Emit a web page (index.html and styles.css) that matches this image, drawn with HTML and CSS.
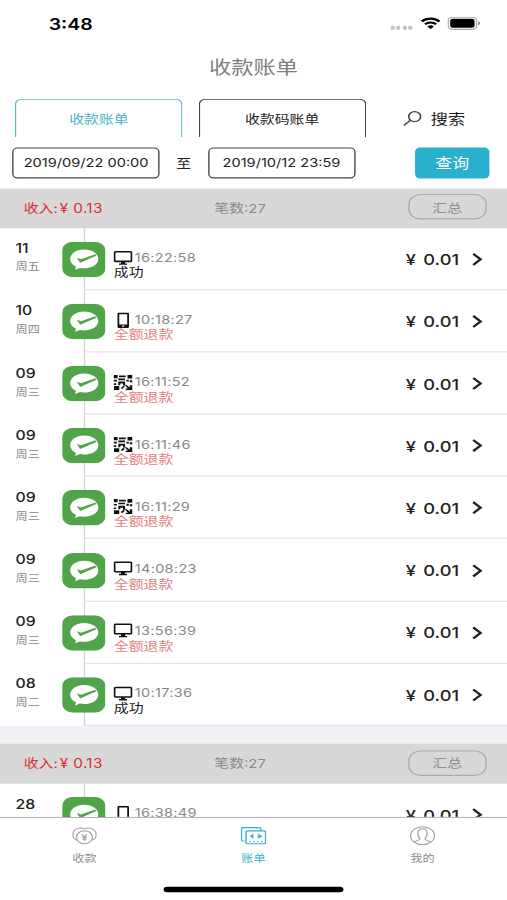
FILE: index.html
```html
<!DOCTYPE html>
<html lang="zh-CN">
<head>
  <meta charset="UTF-8">
  <title>收款账单</title>
  <link rel="stylesheet" href="styles.css">
</head>
<body>
  <svg class="defs">
    <symbol id="pay" viewBox="0 0 32 32">
      <rect width="32" height="32" rx="8" fill="#51a44a"/>
      <path d="M16.3 7C10.300 7 5.900 10.900 5.900 15.700c0 3 1.700 5.300 4.300 6.900l-.7 2.800 3.600-1.700c1 .3 2 .4 3.200.4 6 0 10.400-3.600 10.400-8.400S22.300 7 16.300 7z" fill="#fff"/>
      <path d="M10.800 14.500l2.500 4.600L25.200 12.700l-.7-1.400-10.600 4.500z" fill="#51a44a"/>
    </symbol>
    <symbol id="pc" viewBox="0 0 14 14">
      <rect x=".7" y="1.200" width="12.600" height="8.600" rx=".8" fill="none" stroke="#111" stroke-width="1.400"/>
      <path d="M5.500 10h3v1.700h1.500v1.200H4v-1.200h1.500z" fill="#111"/>
    </symbol>
    <symbol id="phone" viewBox="0 0 14 14">
      <path fill-rule="evenodd" d="M4.200 0h5.900c.8 0 1.300.5 1.300 1.300v11.400c0 .8-.5 1.300-1.300 1.300H4.200c-.8 0-1.300-.5-1.300-1.300V1.300C2.900.5 3.400 0 4.200 0zM4.200 1.500v9.200h5.900V1.500zM6.300 11.700v1.200h1.600v-1.200z" fill="#111"/>
    </symbol>
    <symbol id="qr" viewBox="0 0 14 14">
      <path d="M0 .3h3v2.900H0zM4 .8h5v1.600H4zM10.300 0H14v3.500h-3.700zM0 4.600h2.500v1.500H0zM3.500 3.500h5V5h-5zM9.500 4.500h1.800v1.700H9.500zM3.500 6.300h5v3.500H7V8H5v1.500H3.500zM12 5h2v1.800h-2zM0 7.800h2v1.500H0zM.3 10.300h3.900V14H.3zM5.300 12l2-2 1 1-2 2zM9 9l3 2.500V9.500H14V14H9v-1.500h1.700L8.500 10z" fill="#111"/>
    </symbol>
    <symbol id="arrow" viewBox="0 0 8 12">
      <path d="M1 1l5.500 5L1 11" fill="none" stroke="#222" stroke-width="1.900"/>
    </symbol>
  </svg>

  <div class="app">
    <div class="status">
      <span class="clock">3:48</span>
      <span class="dots"><i></i><i></i><i></i><i></i></span>
      <svg class="wifi" viewBox="0 0 16 12">
        <path d="M1 4.300a10.200 10.200 0 0 1 14 0M3.600 7a6.400 6.400 0 0 1 8.800 0" fill="none" stroke="#000" stroke-width="2.100"/>
        <path d="M8 11.600L5.400 9a3.800 3.800 0 0 1 5.200 0z"/>
      </svg>
      <svg class="battery" viewBox="0 0 25 12">
        <rect x=".5" y=".5" width="21" height="11" rx="3.200" fill="#fff" stroke="#aaa"/>
        <rect x="2" y="2" width="18" height="8" rx="1.700"/>
        <path d="M22.800 4.200a2 2 0 0 1 0 3.600z" fill="#777"/>
      </svg>
    </div>
    <h1>收款账单</h1>

    <div class="tabs">
      <div class="tab active">收款账单</div>
      <div class="tab">收款码账单</div>
      <div class="search">
        <svg viewBox="0 0 14 14"><ellipse cx="8.700" cy="5.200" rx="4.400" ry="4.500"/><path d="M5.500 8.500L.7 13.300"/></svg>
        <span>搜索</span>
      </div>
    </div>

    <div class="filter">
      <div class="date">2019/09/22 00:00</div>
      <span class="to">至</span>
      <div class="date">2019/10/12 23:59</div>
      <button class="query">查询</button>
    </div>

    <div class="list">
      <div class="summary">
        <span class="income">收入:<span>¥ 0.13</span></span>
        <span class="count">笔数:27</span>
        <button class="total">汇总</button>
      </div>
      <div class="row">
        <div class="day"><b>11</b><span>周五</span></div>
        <div class="line"><svg><use href="#pay"/></svg></div>
        <div class="info">
          <div class="detail">
            <div class="time"><svg><use href="#pc"/></svg><span>16:22:58</span></div>
            <div class="state">成功</div>
          </div>
          <span class="money">¥ 0.01</span>
          <svg class="arrow"><use href="#arrow"/></svg>
        </div>
      </div>
      <div class="row">
        <div class="day"><b>10</b><span>周四</span></div>
        <div class="line"><svg><use href="#pay"/></svg></div>
        <div class="info">
          <div class="detail">
            <div class="time"><svg><use href="#phone"/></svg><span>10:18:27</span></div>
            <div class="state refund">全额退款</div>
          </div>
          <span class="money">¥ 0.01</span>
          <svg class="arrow"><use href="#arrow"/></svg>
        </div>
      </div>
      <div class="row">
        <div class="day"><b>09</b><span>周三</span></div>
        <div class="line"><svg><use href="#pay"/></svg></div>
        <div class="info">
          <div class="detail">
            <div class="time"><svg><use href="#qr"/></svg><span>16:11:52</span></div>
            <div class="state refund">全额退款</div>
          </div>
          <span class="money">¥ 0.01</span>
          <svg class="arrow"><use href="#arrow"/></svg>
        </div>
      </div>
      <div class="row">
        <div class="day"><b>09</b><span>周三</span></div>
        <div class="line"><svg><use href="#pay"/></svg></div>
        <div class="info">
          <div class="detail">
            <div class="time"><svg><use href="#qr"/></svg><span>16:11:46</span></div>
            <div class="state refund">全额退款</div>
          </div>
          <span class="money">¥ 0.01</span>
          <svg class="arrow"><use href="#arrow"/></svg>
        </div>
      </div>
      <div class="row">
        <div class="day"><b>09</b><span>周三</span></div>
        <div class="line"><svg><use href="#pay"/></svg></div>
        <div class="info">
          <div class="detail">
            <div class="time"><svg><use href="#qr"/></svg><span>16:11:29</span></div>
            <div class="state refund">全额退款</div>
          </div>
          <span class="money">¥ 0.01</span>
          <svg class="arrow"><use href="#arrow"/></svg>
        </div>
      </div>
      <div class="row">
        <div class="day"><b>09</b><span>周三</span></div>
        <div class="line"><svg><use href="#pay"/></svg></div>
        <div class="info">
          <div class="detail">
            <div class="time"><svg><use href="#pc"/></svg><span>14:08:23</span></div>
            <div class="state refund">全额退款</div>
          </div>
          <span class="money">¥ 0.01</span>
          <svg class="arrow"><use href="#arrow"/></svg>
        </div>
      </div>
      <div class="row">
        <div class="day"><b>09</b><span>周三</span></div>
        <div class="line"><svg><use href="#pay"/></svg></div>
        <div class="info">
          <div class="detail">
            <div class="time"><svg><use href="#pc"/></svg><span>13:56:39</span></div>
            <div class="state refund">全额退款</div>
          </div>
          <span class="money">¥ 0.01</span>
          <svg class="arrow"><use href="#arrow"/></svg>
        </div>
      </div>
      <div class="row">
        <div class="day"><b>08</b><span>周二</span></div>
        <div class="line"><svg><use href="#pay"/></svg></div>
        <div class="info">
          <div class="detail">
            <div class="time"><svg><use href="#pc"/></svg><span>10:17:36</span></div>
            <div class="state">成功</div>
          </div>
          <span class="money">¥ 0.01</span>
          <svg class="arrow"><use href="#arrow"/></svg>
        </div>
      </div>

      <div class="summary next">
        <span class="income">收入:<span>¥ 0.13</span></span>
        <span class="count">笔数:27</span>
        <button class="total">汇总</button>
      </div>
      <div class="row">
        <div class="day"><b>28</b></div>
        <div class="line"><svg><use href="#pay"/></svg></div>
        <div class="info">
          <div class="detail">
            <div class="time"><svg><use href="#phone"/></svg><span>16:38:49</span></div>
          </div>
          <span class="money">¥ 0.01</span>
          <svg class="arrow"><use href="#arrow"/></svg>
        </div>
      </div>
    </div>

    <div class="nav">
      <div class="item">
        <svg viewBox="0 0 20 18">
          <path d="M5 13.500A5.500 5.500 0 0 1 1 8a6 6 0 0 1 9-5.500A6 6 0 0 1 19 8a5.500 5.500 0 0 1-4 5.500"/>
          <circle cx="10" cy="10.500" r="6.200"/>
          <path d="M8 7.500l2 2.800 2-2.800M10 10.300V14M8.200 10.700h3.600M8.200 12.300h3.600"/>
        </svg>
        <span>收款</span>
      </div>
      <div class="item active">
        <svg viewBox="0 0 20 18">
          <path d="M3 14H1.500Q.6 14 .6 13V2.300Q.6 1.300 1.500 1.300h13.300q.9 0 .9 1v1.900"/>
          <rect x="4.200" y="4.400" width="15.200" height="12.200" rx="1"/>
          <path d="M10 7.500L8 9.500l2 1.800M13.500 7.500l2.500 2-2.500 1.800M7.500 9.500H10M12.800 9.500H16M7.200 13.700v1.600M10.300 13.700v1.600M13.400 13.700v1.600M16.400 13.700v1.600"/>
        </svg>
        <span>账单</span>
      </div>
      <div class="item">
        <svg viewBox="0 0 20 18">
          <ellipse cx="10" cy="9" rx="9.300" ry="8.500"/>
          <path d="M3.500 15c1-1.500 4.500-1.200 4.700-3.300C6.800 10.500 6.400 9 6.400 6.300c0-2.400 1.500-4 3.600-4s3.600 1.600 3.600 4c0 2.700-.4 4.200-1.800 5.400.2 2.100 3.700 1.800 4.700 3.300"/>
        </svg>
        <span>我的</span>
      </div>
      <div class="home"></div>
    </div>
  </div>
</body>
</html>
```
FILE: styles.css
```css
body {
  margin: 0;
  width: 507px;
  height: 900px;
  overflow: hidden;
  background: #fff;
}

.defs {
  display: none;
}

/* 375x812 screen stretched over the whole window */
.app {
  display: flex;
  flex-direction: column;
  width: 375px;
  height: 812px;
  transform: scale(1.352, 1.1084);
  transform-origin: 0 0;
  font-family: Inter, "Noto Sans CJK SC", sans-serif;
  font-size: 11px;
  color: #222;
  background: #fff;
}

.app * {
  box-sizing: border-box;
}

button {
  padding: 0;
  font-family: inherit;
}

.status {
  display: flex;
  align-items: center;
  height: 42px;
  padding: 0 19px 0 36px;
  flex-shrink: 0;
}

.clock {
  flex: 1;
  font-size: 14.4px;
  font-weight: 600;
  color: #000;
}

.dots {
  display: flex;
  gap: 1.7px;
  margin: 8px 6px 0 0;
}

.dots i {
  width: 2.8px;
  height: 3.2px;
  border-radius: 50%;
  background: #c4c4c4;
}

.wifi {
  width: 15px;
  height: 12px;
  margin-right: 5px;
}

.battery {
  width: 25px;
  height: 12px;
}

h1 {
  margin: 0;
  height: 47px;
  line-height: 38px;
  text-align: center;
  font-size: 16.5px;
  font-weight: 400;
  color: #808080;
  flex-shrink: 0;
}

.tabs {
  display: flex;
  height: 35px;
  padding-left: 11.2px;
  flex-shrink: 0;
}

.tab {
  width: 124px;
  margin-right: 11.5px;
  border: 1px solid #444;
  border-bottom: none;
  border-radius: 5px 5px 0 0;
  text-align: center;
  line-height: 36.5px;
}

.tab.active {
  color: #45b5c9;
  border-color: #5bbccb;
}

.search {
  display: flex;
  align-items: center;
  gap: 7px;
  margin-left: 15.5px;
  font-size: 12.7px;
}

.search svg {
  width: 14px;
  height: 14px;
  fill: none;
  stroke: #444;
  stroke-width: 1.2;
}

.filter {
  display: flex;
  align-items: center;
  height: 45.6px;
  padding: 0 13px 0 9.2px;
  flex-shrink: 0;
}

.date {
  width: 109px;
  height: 28px;
  border: 1px solid #444;
  border-radius: 4px;
  line-height: 27px;
  text-align: center;
  font-size: 10.8px;
}

.to {
  width: 35.500px;
  text-align: center;
}

.query {
  width: 55px;
  height: 28px;
  margin-left: auto;
  border: none;
  border-radius: 4px;
  background: #28b0cd;
  color: #fff;
  font-size: 12.500px;
}

.list {
  flex: 1;
  min-height: 0;
  overflow: hidden;
}

.summary {
  display: flex;
  align-items: center;
  height: 36.2px;
  padding: 0 15px 2px 17.500px;
  background: #d8d8d8;
}

.summary.next {
  height: 52.2px;
  border-top: 16px solid #f0f0f5;
}

.income {
  width: 141px;
  color: #e02b30;
}

.income span {
  margin-left: 1.500px;
  font-size: 11.300px;
  letter-spacing: .3px;
}

.count {
  color: #8a8a8a;
}

.total {
  width: 58.500px;
  height: 23px;
  margin-left: auto;
  border: 1px solid #aaa;
  border-radius: 9px;
  background: none;
  color: #8f8f8f;
  font-size: 11px;
}

.row {
  display: flex;
  height: 56.150px;
}

.day {
  width: 46.200px;
  padding: 11.500px 0 0 11.5px;
}

.day b,
.day span {
  display: block;
  height: 16px;
  line-height: 15px;
  font-size: 11.700px;
  font-weight: 500;
}

.day span {
  font-size: 9px;
  font-weight: 400;
  color: #888;
}

.line {
  position: relative;
  z-index: 1;
  display: flex;
  align-items: center;
  width: 32px;
  background: linear-gradient(#d5d5d5, #d5d5d5) 15.5px 0 / 1px 100% no-repeat;
}

.line svg {
  width: 32px;
  height: 32px;
}

/* the divider starts at the timeline */
.info {
  display: flex;
  align-items: center;
  flex: 1;
  margin-left: -15.500px;
  padding: 0 18px 0 21.500px;
  background: linear-gradient(#e2e2e2, #e2e2e2) 0 100% / 100% 1px no-repeat;
}

.detail {
  flex: 1;
  height: 56px;
  padding-top: 20px;
}

.time {
  display: flex;
  align-items: center;
  gap: 1.5px;
  height: 13.500px;
  font-size: 10.700px;
  letter-spacing: .25px;
  color: #888;
}

.time svg {
  width: 14px;
  height: 14px;
}

.state {
  height: 13px;
  line-height: 15px;
}

.refund {
  color: #e27f7f;
}

.money {
  margin-right: 9.500px;
  padding-top: 1px;
  font-size: 13.500px;
  font-weight: 450;
  word-spacing: 1.800px;
}

.arrow {
  width: 8px;
  height: 12px;
}

.nav {
  display: flex;
  flex-wrap: wrap;
  align-content: flex-start;
  justify-content: center;
  height: 75.500px;
  border-top: 1px solid #b5b5b5;
  background: #fff;
  flex-shrink: 0;
}

.item {
  display: flex;
  flex-direction: column;
  align-items: center;
  width: 125px;
  height: 62.700px;
  padding-top: 7.500px;
  font-size: 9px;
  color: #909090;
}

.item svg {
  width: 19px;
  height: 18px;
  fill: none;
  stroke: #a0a0a0;
  stroke-width: .9;
}

.item span {
  margin-top: 4.500px;
  line-height: 14px;
}

.item.active {
  color: #3aafc5;
}

.item.active svg {
  stroke: #3aafc5;
  stroke-width: 1.1;
}

.home {
  width: 133px;
  height: 4.800px;
  border-radius: 3px;
  background: #000;
}
```
